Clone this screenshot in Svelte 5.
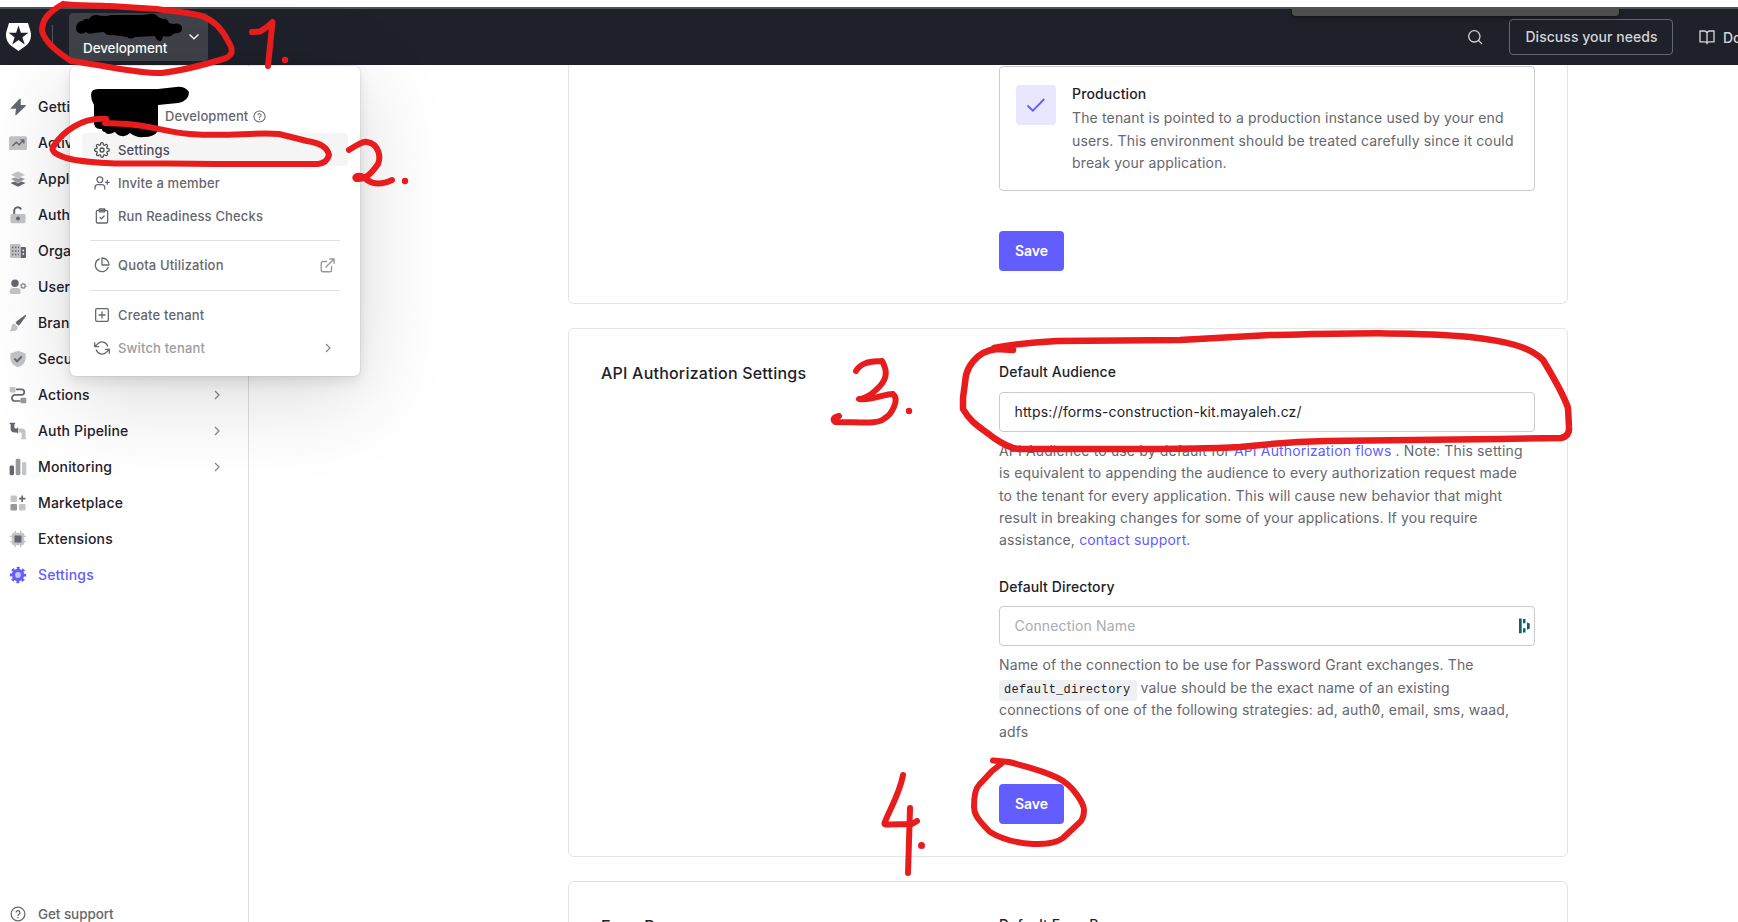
<script>
  const D = '#65676e', M = '#96989c', L = '#c3c4c6';
  const nav = [
    { label: 'Getting Started', icon: `<path fill="${D}" d="M10.8.6 1.6 10.2q-.2.6.4.6h5L6.2 17l.9.3L16.8 7.9q.2-.7-.5-.8h-4.6l.1-6.2z"/>` },
    { label: 'Activity', icon: `<rect y="2.2" width="18" height="13.8" rx="1.6" fill="${L}"/><path fill="none" stroke="${D}" stroke-width="1.4" d="m3.3 12 4-3.8 2.8 2.5L14.6 6M11.3 5.9h3.5v3.5"/>` },
    { label: 'Applications', icon: `<path fill="${D}" d="m1.5 13 7.5-3 7.5 3L9 16.8z"/><path fill="${M}" d="m1.5 9 7.5-3 7.5 3L9 13z" stroke="#fff" stroke-width=".5"/><path fill="${L}" d="m1.5 4.8 7.5-3.6 7.5 3.6L9 8.6z" stroke="#fff" stroke-width=".5"/>` },
    { label: 'Authentication', icon: `<path fill="none" stroke="${D}" stroke-width="1.9" d="M5.2 8.2V4.8a3.6 3.6 0 0 1 6.9-1.3"/><rect x="1.5" y="8" width="15" height="9.2" rx="1.4" fill="${L}"/><circle cx="9" cy="12.6" r="2" fill="${D}"/>` },
    { label: 'Organizations', icon: `<path fill="${D}" d="M11.5 5h4.2q1.3 0 1.3 1.3v8.4q0 1.3-1.3 1.3h-4.2z"/><rect x="1" y="2" width="10.5" height="14" rx="1" fill="${L}"/><path stroke="${D}" stroke-width="1.5" stroke-dasharray="1.5 1.5" d="M3 5.5h7M3 9h7M3 12.5h7"/><path stroke="#fff" stroke-width="1.4" d="M13.5 8.5h1.6M13.5 12h1.6"/>` },
    { label: 'User Management', icon: `<circle cx="6" cy="5.3" r="3.7" fill="${D}"/><path fill="${L}" d="M.8 15v-1.7Q.8 10 4.2 10h4q3.4 0 3.4 3.3V15q0 1-1 1H1.800q-1 0-1-1z"/><circle cx="14.200" cy="8" r="1.900" fill="none" stroke="${M}" stroke-width="1.5"/><circle cx="14.200" cy="8" r="2.800" fill="none" stroke="${M}" stroke-width="1" stroke-dasharray="1 1.930"/>` },
    { label: 'Branding', icon: `<path fill="${D}" d="M16.400.8q1 .3.6 1.300L11.400 10 9.500 11.700 6.500 8.800 8 7z"/><path fill="${L}" d="M5.500 9.700 8.600 12.600Q8.500 17.200 4.600 17.200H1.200Q.6 16.800 1.300 16.300 2.300 15.600 2.400 13 2.800 9.800 5.500 9.700z"/>` },
    { label: 'Security', icon: `<path fill="${L}" d="m9 .8 7.600 2.700v5.200Q16.400 14.500 9 17.200 1.600 14.500 1.400 8.700V3.500z"/><path fill="none" stroke="${D}" stroke-width="1.900" d="m5.300 8.600 2.800 2.700 4.600-4.800"/>` },
    { label: 'Actions', arrow: true, icon: `<path fill="none" stroke="${D}" stroke-width="1.700" d="M7 3.300h5.500a2.700 2.700 0 0 1 0 5.600H6a3 3 0 0 0 0 6.100h5.500"/><rect x=".7" y=".9" width="5.800" height="5.500" rx=".9" fill="${L}"/><rect x="11.500" y="11.700" width="5.800" height="5.500" rx=".9" fill="${M}"/>` },
    { label: 'Auth Pipeline', arrow: true, icon: `<path fill="${D}" d="M.6.700h5.500v1.200h-.7v3.600q0 1 1 1h1.500v-.8h1.200v5.500H7.900v-.8H5.500Q1.600 10.300 1.600 6.400V1.900h-1z"/><path fill="${L}" d="M9.500 6.500h3.300q3.800 0 3.800 4v5.400h.8v1.300h-5.500v-1.300h.8v-4.400q0-1-1-1H9.500z"/>` },
    { label: 'Monitoring', arrow: true, icon: `<rect x=".6" y="7.500" width="4.400" height="9.700" rx="1.400" fill="${D}"/><rect x="6.700" y=".7" width="4.700" height="16.500" rx="1.400" fill="${M}"/><rect x="13" y="4" width="4.300" height="13.200" rx="1.400" fill="${L}"/>` },
    { label: 'Marketplace', icon: `<rect x="1.500" y="1.500" width="6.500" height="6.500" rx="1.300" fill="${L}"/><rect x="1.500" y="10" width="6.500" height="6.500" rx="1.300" fill="${M}"/><rect x="10" y="10" width="6.500" height="6.500" rx="1.300" fill="${L}"/><path stroke="${D}" stroke-width="1.700" d="M13.200 1.500v6.400M10 4.700h6.400"/>` },
    { label: 'Extensions', icon: `<path stroke="${L}" stroke-width="1.300" d="M6.300.8v16.400M11.700.8v16.400M.8 6.300h16.400M.8 11.700h16.400"/><rect x="2.800" y="2.800" width="12.400" height="12.400" rx="2" fill="${L}"/><rect x="5.500" y="5.500" width="7" height="7" rx=".5" fill="${D}"/>` },
    { label: 'Settings', active: true, icon: `<circle cx="9" cy="9" r="6.200" fill="#635dff"/><circle cx="9" cy="9" r="7" fill="none" stroke="#635dff" stroke-width="2.400" stroke-dasharray="2.900 2.598" stroke-dashoffset="1.450"/><circle cx="9" cy="9" r="2.900" fill="#c9c6ff"/>` }
  ];
  const gear = '<circle cx="12" cy="12" r="3"/><path d="M19.400 15a1.650 1.650 0 0 0 .33 1.820l.06.06a2 2 0 1 1-2.830 2.830l-.06-.06a1.650 1.650 0 0 0-2.800 1.170V21a2 2 0 0 1-4 0v-.09A1.650 1.650 0 0 0 9 19.400a1.650 1.650 0 0 0-1.820.33l-.06.06a2 2 0 1 1-2.830-2.830l.06-.06a1.650 1.650 0 0 0-1.170-2.800H3a2 2 0 0 1 0-4h.09A1.650 1.650 0 0 0 4.600 9a1.650 1.650 0 0 0-.33-1.820l-.06-.06a2 2 0 1 1 2.830-2.830l.06.06A1.650 1.650 0 0 0 9.900 3.180V3a2 2 0 0 1 4 0v.09a1.650 1.650 0 0 0 2.900 1.260l.06-.06a2 2 0 1 1 2.830 2.830l-.06.06A1.650 1.650 0 0 0 20.900 10H21a2 2 0 0 1 0 4h-.09a1.650 1.650 0 0 0-1.510 1z"/>';
  const groups = [
    [
      { label: 'Settings', hover: true, icon: gear },
      { label: 'Invite a member', icon: '<circle cx="8.800" cy="7" r="4.300"/><path d="M1.500 21v-2.200a4.500 4.500 0 0 1 4.500-4.500h5.600a4.500 4.500 0 0 1 4.500 4.500V21M20 8v6M17 11h6"/>' },
      { label: 'Run Readiness Checks', icon: '<rect x="3.500" y="3.500" width="17" height="19" rx="2"/><path d="M8 1.500h8v4.300H8zM9 14l2.200 2.200 4-4.200"/>' }
    ],
    [{ label: 'Quota Utilization', ext: true, icon: '<path d="M21.200 15.900A10 10 0 1 1 8 2.800M22.500 12A10.500 10.500 0 0 0 12 1.500V12z"/>' }],
    [
      { label: 'Create tenant', icon: '<rect x="2.500" y="2.500" width="19" height="19" rx="2"/><path d="M12 7.500v9M7.500 12h9"/>' },
      { label: 'Switch tenant', muted: true, icon: '<path d="M1 4v6h6M23 20v-6h-6M20.500 9A9 9 0 0 0 5.600 5.600L1 10M23 14l-4.600 4.400A9 9 0 0 1 3.500 15"/>' }
    ]
  ];
  const help = '<circle cx="12" cy="12" r="10.300"/><path d="M9.100 9a3 3 0 0 1 5.800 1c0 2-2.900 2.500-2.900 4M12 17.200v.3"/>';
</script>

{#snippet line(body, size = 16, width = 1.9)}
  <svg class="line" width={size} height={size} viewBox="0 0 24 24" stroke-width={width}>{@html body}</svg>
{/snippet}

<div class="app">
  <header>
    <svg class="logo" width="25" height="28" viewBox="0 0 25 28"><path fill="#fff" d="M3 0h19l2.700 9q1.500 9-5.200 14L12.500 28l-7-5Q-1.200 18 .3 9z"/><path fill="#1e212a" d="m12.500 2.500 2.400 7.200h7.600l-6.100 4.500 2.300 7.300-6.200-4.500-6.200 4.500 2.300-7.300-6.100-4.500h7.600z"/></svg>
    <div class="divider"></div>
    <button class="tenant"><span>Development</span><svg width="12" height="8" viewBox="0 0 12 8"><path d="m1.500 1.500 4.500 4.300 4.500-4.300" fill="none" stroke="#fff" stroke-width="1.300"/></svg></button>
    <div class="tools">
      {@render line('<circle cx="11" cy="11" r="8.500"/><path d="m17.300 17.300 4.700 4.700"/>', 16, 1.9)}
      <button class="discuss">Discuss your needs</button>
      <span class="docs">{@render line('<path d="M1.500 3h6.500a4 4 0 0 1 4 3v16a3 3 0 0 0-3-2.600H1.500zM22.500 3H16a4 4 0 0 0-4 3v16a3 3 0 0 1 3-2.600h7.500z"/>', 16, 2)}Docs</span>
    </div>
    <div class="tab"></div>
  </header>

  <div class="body">
    <nav>
      {#each nav as item}
        <a class:active={item.active}>
          <svg width="18" height="18" viewBox="0 0 18 18">{@html item.icon}</svg>
          <span>{item.label}</span>
          {#if item.arrow}<svg class="arrow" width="6" height="10" viewBox="0 0 6 10"><path d="m1 1 4 4-4 4"/></svg>{/if}
        </a>
      {/each}
      <a class="support">{@render line(help, 16, 1.9)}<span>Get support</span></a>
    </nav>

    <main>
      <section class="card first">
        <div></div>
        <div>
          <div class="env">
            <div class="check"><svg width="20" height="16" viewBox="0 0 20 16"><path d="m1.500 8.500 5.300 5.200L18.300 2" fill="none" stroke="#635dff" stroke-width="1.800"/></svg></div>
            <div><strong>Production</strong><p>The tenant is pointed to a production instance used by your end<br />users. This environment should be treated carefully since it could<br />break your application.</p></div>
          </div>
          <button class="save">Save</button>
        </div>
      </section>

      <section class="card second">
        <h2>API Authorization Settings</h2>
        <div>
          <div class="label">Default Audience</div>
          <div class="input">https://forms-construction-kit.mayaleh.cz/</div>
          <p>API Audience to use by default for <a>API Authorization flows</a> . Note: This setting<br />is equivalent to appending the audience to every authorization request made<br />to the tenant for every application. This will cause new behavior that might<br />result in breaking changes for some of your applications. If you require<br />assistance, <a>contact support</a>.</p>
          <div class="label next">Default Directory</div>
          <div class="input empty"><span>Connection Name</span><svg width="12" height="16" viewBox="0 0 12 16" fill="#0e6270"><path d="M0 .500h2.700v14.800H0zM4 1h2.500v4.300H4zM4 10.300h2.500v4.300H4zM8 4.500l2.800 1v5L8 11.800z"/></svg></div>
          <p>Name of the connection to be use for Password Grant exchanges. The<br /><code>default_directory</code> value should be the exact name of an existing<br />connections of one of the following strategies: ad, auth<span class="zero">0</span>, email, sms, waad,<br />adfs</p>
          <button class="save">Save</button>
        </div>
      </section>

      <section class="card third">
        <h2>Error Pages</h2>
        <div class="label">Default Error Page</div>
      </section>
    </main>
  </div>

  <div class="menu">
    <div class="env-name">Development {@render line(help, 13, 1.9)}</div>
    {#each groups as group, i}
      {#if i}<hr />{/if}
      {#each group as item}
        <div class="row" class:hover={item.hover} class:muted={item.muted}>
          {@render line(item.icon, 16, 1.9)}
          <span>{item.label}</span>
          {#if item.ext}<i>{@render line('<path d="M18.500 13.500v6a2.500 2.500 0 0 1-2.500 2.500H4.500A2.500 2.500 0 0 1 2 19.500V8a2.500 2.500 0 0 1 2.500-2.500h6M15.500 1.500h7v7M9.500 14.500l13-13"/>', 15, 2.2)}</i>{/if}
          {#if item.muted}<svg class="arrow" width="6" height="10" viewBox="0 0 6 10"><path d="m1 1 4 4-4 4"/></svg>{/if}
        </div>
      {/each}
    {/each}
  </div>

  <svg class="ink" width="1738" height="922" viewBox="0 0 1738 922">
    <g fill="#000">
      <path d="M76 28q0-6 6-7 3-3 7-2 2-4 8-4 8 2 14 0h32l6-1q6-1 9 3l5 2q4-1 6 4l4 1q7-2 9 3 1 5-4 6-5 0-7 3-4 1-8 0-1 6-4 5-3-1-4-5l-20 1q-4 3-8 0l-14-2q-6 1-9-3l-10 1q-5 2-8-1-4 3-7 1-3-1-3-5z"/>
      <path d="M91 95q0-6 7-6l60 0 18-2q9-1 13 5 0 9-11 11l-20 2v26q-4 6-14 6-8 1-14-4-4 4-8 3-4 0-7-4-8 4-10 0-3 0-3-3-9 1-8-9V105q-3-5-3-10z"/>
    </g>
    <g fill="none" stroke="#e81c1c" stroke-width="6" stroke-linecap="round" stroke-linejoin="round">
      <path d="M63 4C78 6 94 5 110 6L157 9C178 12 194 13 204 17C217 22 224 33 228 41C235 52 232 57 220 60C203 65 179 71 162 73C142 74 113 67 71 61C53 49 45 41 42 31C42 19 49 12 63 4"/>
      <path d="m252 32 8-.5q6-3 12.500-9.500L268 66"/>
      <path d="M106 119C82 117 62 132 53 147C50 153 64 158 75 160C113 166 148 162 215 164L318 164Q327 163 329 155Q327 144 307 141L279 134C250 132 230 137 190 134C166 132 152 126 127 124L105 123"/>
      <path d="M349 150C357 145 363 141 367 142C379 144 381 157 378 164C371 174 365 180 356 179C353 175 362 174 367 180Q377 187 392 180"/>
      <path d="M856 371C862 361 872 362 882 361C889 373 886 381 876 390C869 397 860 400 859 399C872 401 887 393 893 394C900 400 891 415 885 418C878 425 862 422 835 422Q831 418 839 416"/>
      <path stroke-width="6.500" d="M1013 350 997 349C974 351 967 371 966 375L963 398V409C971 423 980 427 994 438Q1010 449 1020 449C1105 449 1190 450 1240 447Q1285 442 1325 441L1500 439 1561 438Q1570 436 1569 427L1568 408C1563 393 1552 375 1543 360C1529 346 1505 341 1470 337C1410 331 1330 334 1270 335L1180 340 1057 341Q1020 343 994 348"/>
      <path d="M903 775C900 793 888 813 884.500 823Q884 825 889 824.500L912 824 917 821M910 808 908 873"/>
      <path d="M993 760.500 1009 762C1025 766 1048 773 1058 778C1073 785 1084 804 1084 810Q1084 819 1079 823L1063 838C1054 845 1040 844 1033 844C1014 843 1000 838 990 832C976 818 974 813 974 807Q974 790 979 785L992 771 1001 764"/>
    </g>
    <g fill="#e81c1c"><circle cx="285" cy="60" r="3.200"/><circle cx="405" cy="181" r="3.200"/><circle cx="909" cy="411" r="3.200"/><circle cx="921.500" cy="845.500" r="3.500"/></g>
  </svg>
</div>

<style>
  :global(body) { margin: 0; background: #fff; }
  .app { position: relative; box-sizing: border-box; width: 1738px; height: 922px; padding-top: 7px; overflow: hidden; background: #fff; font-family: Inter, sans-serif; font-size: 14px; color: #1e212a; display: flex; flex-direction: column; }
  button { font: inherit; border: 0; padding: 0; margin: 0; }
  .line { fill: none; stroke: currentColor; stroke-linecap: round; stroke-linejoin: round; flex: none; display: block; }
  header { position: relative; box-sizing: border-box; height: 58px; flex: none; border-top: 2px solid #505154; background: #1e212a; display: flex; align-items: center; padding-left: 6px; overflow: hidden; }
  .divider { width: 1px; height: 24px; background: #52545c; margin: 0 16px 0 21px; }
  .tenant { box-sizing: border-box; width: 139px; height: 48px; border-radius: 4px; background: #404249; color: #fff; font-weight: 500; font-size: 13.5px; display: flex; justify-content: space-between; padding: 0 8px 0 14px; align-items: center; letter-spacing: -.1px; }
  .tenant span { padding-top: 21.5px; }
  .tools { margin-left: auto; margin-right: -20px; display: flex; align-items: center; color: #d3d4d6; font-weight: 500; }
  .discuss { box-sizing: border-box; width: 164px; height: 36px; margin: 0 26px; padding: 0 0 2px 1px; border: 1px solid #65676e; border-radius: 4px; color: #d3d4d6; background: none; font-weight: 500; letter-spacing: .04px; white-space: nowrap; }
  .docs { display: flex; align-items: center; gap: 8px; width: 59px; }
  .tab { position: absolute; left: 1292px; top: -2px; width: 327px; height: 9px; background: #4e4e4e; border-radius: 0 0 4px 4px; box-shadow: 0 1px 5px #0008; }
  .body { display: flex; flex: 1; min-height: 0; }
  nav { box-sizing: border-box; width: 249px; flex: none; border-right: 1px solid #dcdde0; padding: 23.500px 28px 0 9px; display: flex; flex-direction: column; font-weight: 500; letter-spacing: .16px; }
  nav a { height: 36px; display: flex; align-items: center; gap: 11px; white-space: nowrap; }
  nav .active { color: #635dff; }
  .arrow { margin-left: auto; flex: none; fill: none; stroke: #85878c; stroke-width: 1.2; }
  .support { margin: auto 0 -10px; padding-left: 1px; color: #65676e; gap: 12px; font-weight: 450; font-size: 13.5px; letter-spacing: -.08px; }
  main { margin-left: 319px; width: 1000px; display: flex; flex-direction: column; gap: 24px; }
  .card { box-sizing: border-box; width: 1000px; flex: none; border: 1px solid #e2e3e5; border-radius: 6px; padding: 32px; display: grid; grid-template-columns: 398px 536px; align-content: start; }
  .first { height: 239px; border-top: 0; border-radius: 0 0 6px 6px; padding-top: 1px; }
  .second { height: 529px; }
  .third { height: 200px; }
  h2 { margin: 0; font-size: 16px; line-height: 24px; font-weight: 500; letter-spacing: .21px; }
  .env { box-sizing: border-box; height: 125px; border: 1px solid #c9cace; border-radius: 4px; padding: 18px 16px; display: flex; gap: 16px; margin-bottom: 40px; }
  .env strong { display: block; font-weight: 500; line-height: 17px; padding-bottom: 5.4px; letter-spacing: .15px; }
  .check { width: 40px; height: 40px; flex: none; border-radius: 4px; background: #e9e7ff; display: grid; place-items: center; }
  p { margin: 0; line-height: 22.300px; color: #65676e; white-space: nowrap; letter-spacing: .15px; }
  .save { width: 65px; height: 40px; padding-bottom: 2px; border-radius: 4px; background: #635dff; color: #fff; font-weight: 600; }
  .label { line-height: 22px; font-weight: 500; letter-spacing: .1px; }
  .next { margin-top: 25px; }
  .input { box-sizing: border-box; height: 40px; margin: 9px 0 8px; padding: 0 3px 2px 14.500px; border: 1px solid #c9cace; border-radius: 4px; display: flex; align-items: center; justify-content: space-between; letter-spacing: .15px; }
  .empty { color: #a9abaf; margin-top: 8px; padding-bottom: 1px; }
  p a { color: #635dff; }
  .zero { font-feature-settings: "zero"; }
  code { font-family: "Liberation Mono", monospace; font-size: 12px; line-height: 14px; letter-spacing: .24px; color: #1e212a; background: #eff0f2; border-radius: 4px; padding: 3px 6px 4px 5px; }
  .second .save { margin-top: 40px; padding-bottom: 0; }
  .menu { position: absolute; box-sizing: border-box; left: 70px; top: 66px; width: 290px; height: 310px; padding: 0 12px; background: #fff; border-radius: 6px; box-shadow: 0 0 2px #0003, 0 6px 14px #0000001a, 0 20px 90px #00000026; color: #65676e; font-size: 13px; font-weight: 450; }
  .env-name { box-sizing: border-box; height: 67px; padding: 42px 0 0 83px; display: flex; align-items: flex-start; gap: 5px; line-height: 17px; letter-spacing: .1px; }
  .env-name .line { margin-top: 2px; }
  .row { box-sizing: border-box; height: 33px; border-radius: 4px; padding: 0 12px; display: flex; align-items: center; gap: 8px; }
  .row span { letter-spacing: .16px; }
  .row i { margin-left: auto; margin-right: 1px; color: #96989c; }
  .row .arrow { margin-right: 5px; }
  .hover { background: #f5f5f6; color: #4c4e56; }
  .muted span { color: #9b9da1; }
  hr { border: 0; height: 1px; background: #dfe0e2; margin: 8px 8px 7.500px; }
  .ink { position: absolute; left: 0; top: 0; pointer-events: none; }
</style>
